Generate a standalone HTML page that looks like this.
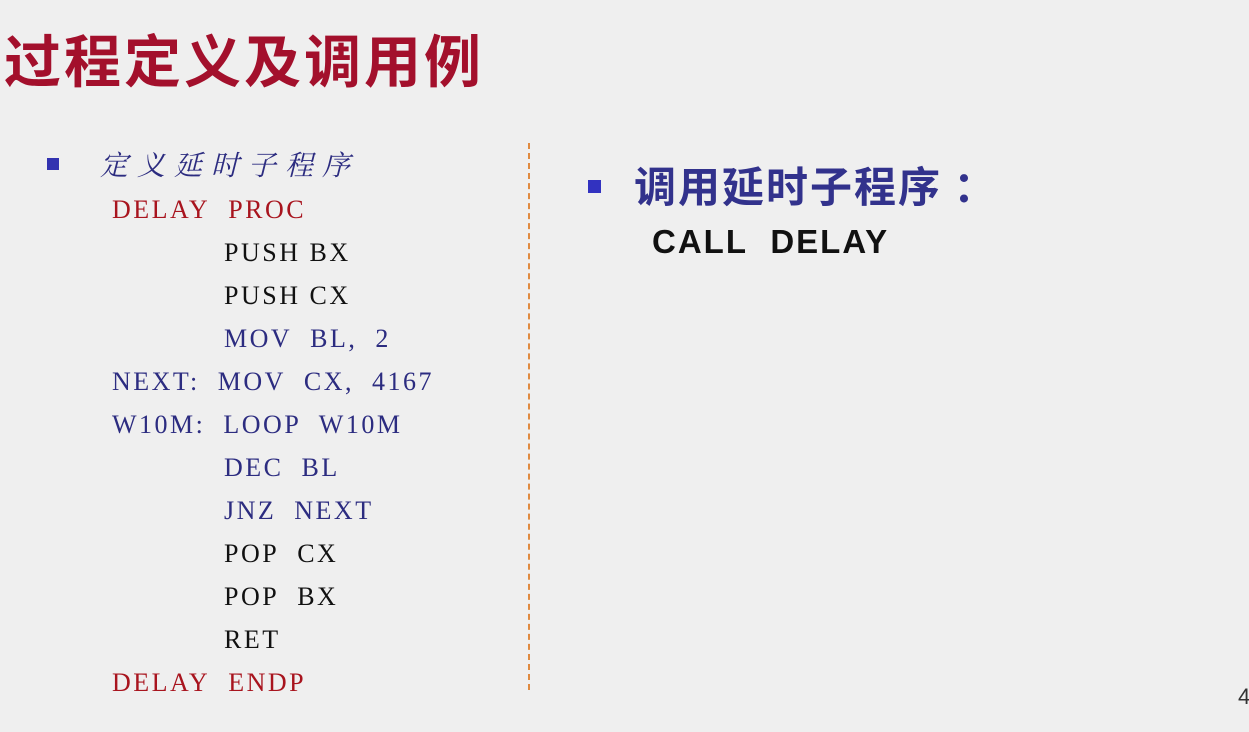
<!DOCTYPE html>
<html><head><meta charset="utf-8"><style>
body{margin:0;width:1249px;height:732px;background:#efefef;position:relative;overflow:hidden}
div{position:absolute;white-space:nowrap}
.t{left:4px;top:17px;font:bold 57px "Liberation Sans","Noto Sans CJK SC",sans-serif;color:#a3102c;letter-spacing:3px}
.c{font:26px "Liberation Serif",serif;letter-spacing:2.5px;line-height:30px}
.r{color:#a8141e}.b{color:#2c2c80}.k{color:#111}
</style></head><body>
<div class="t">过程定义及调用例</div>
<div style="left:47px;top:158px;width:12px;height:12px;background:#3232b0"></div>
<div style="left:100px;top:144px;font:italic 28px 'Noto Serif CJK SC',serif;color:#2c2c80;letter-spacing:9px">定义延时子程序</div>
<div class="c r" style="left:112px;top:195px">DELAY&nbsp; PROC</div>
<div class="c k" style="left:224px;top:238px">PUSH BX</div>
<div class="c k" style="left:224px;top:281px">PUSH CX</div>
<div class="c b" style="left:224px;top:324px">MOV&nbsp; BL,&nbsp; 2</div>
<div class="c b" style="left:112px;top:367px">NEXT:&nbsp; MOV&nbsp; CX,&nbsp; 4167</div>
<div class="c b" style="left:112px;top:410px">W10M:&nbsp; LOOP&nbsp; W10M</div>
<div class="c b" style="left:224px;top:453px">DEC&nbsp; BL</div>
<div class="c b" style="left:224px;top:496px">JNZ&nbsp; NEXT</div>
<div class="c k" style="left:224px;top:539px">POP&nbsp; CX</div>
<div class="c k" style="left:224px;top:582px">POP&nbsp; BX</div>
<div class="c k" style="left:224px;top:625px">RET</div>
<div class="c r" style="left:112px;top:668px">DELAY&nbsp; ENDP</div>
<div style="left:528px;top:143px;height:547px;border-left:2px dashed #e08a40"></div>
<div style="left:588px;top:180px;width:13px;height:13px;background:#3232c0"></div>
<div style="left:634px;top:160px;font:bold 42px 'Noto Sans CJK SC',sans-serif;color:#32328c;line-height:50px;letter-spacing:2px">调用延时子程序 ：</div>
<div style="left:652px;top:222px;font:bold 33px 'Liberation Sans',sans-serif;color:#111;line-height:40px;letter-spacing:2px">CALL&nbsp; DELAY</div>
<div style="left:1238px;top:684px;font:22px 'Liberation Sans',sans-serif;color:#333">4</div>
</body></html>
